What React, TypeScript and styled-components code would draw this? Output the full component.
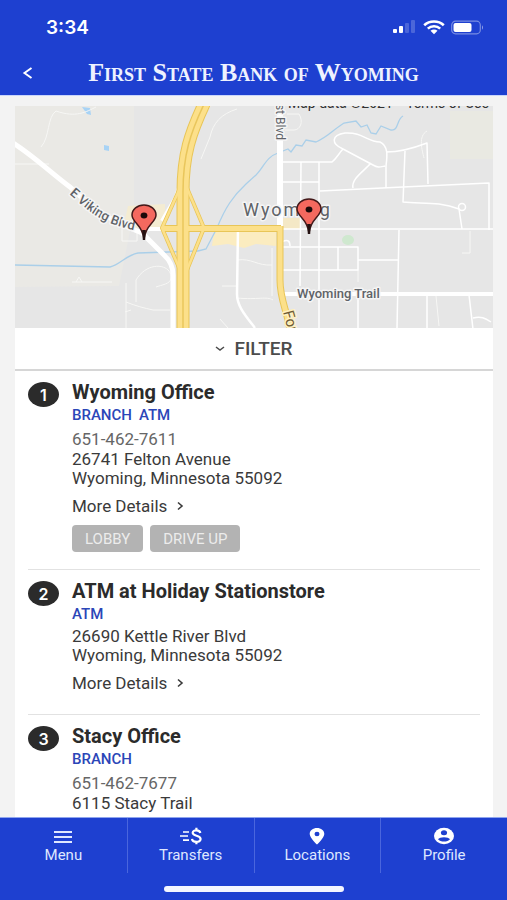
import React from "react";
import styled, { createGlobalStyle } from "styled-components";

const BLUE = "#1e40d0";

const GlobalStyle = createGlobalStyle`
  * { box-sizing: border-box; }
  body { margin: 0; background: #f2f2f2; font-family: Roboto, sans-serif; color: #303030; }
  button { font: inherit; cursor: pointer; }
  a { color: inherit; text-decoration: none; }
`;

const Shell = styled.div`
  height: 100vh;
  display: flex;
  flex-direction: column;
`;

const Header = styled.header`
  flex: none;
  background: ${BLUE};
  color: #fff;
  border-bottom: 1px solid #c9d5fb;
`;

const StatusBar = styled.div`
  display: flex;
  align-items: center;
  justify-content: space-between;
  height: 54px;
  padding: 0 22px 0 46px;
`;

const Clock = styled.time`
  font-family: Inter, sans-serif;
  font-size: 19px;
  font-weight: 600;
`;

const StatusIcons = styled.div`
  display: flex;
  align-items: center;
  gap: 6px;
`;

const TitleBar = styled.div`
  display: grid;
  grid-template-columns: 56px 1fr 56px;
  align-items: center;
  height: 41px;
  padding-bottom: 4px;
`;

const BackButton = styled.button`
  display: flex;
  align-items: center;
  height: 36px;
  padding: 0 0 0 22px;
  border: 0;
  background: none;
  color: inherit;
`;

const BankName = styled.h1`
  margin: 0;
  text-align: center;
  white-space: nowrap;
  font-family: "Liberation Serif", serif;
  font-size: 26px;
  line-height: 32px;
  font-weight: 700;
  font-variant: small-caps;
  color: #eef2ff;
`;

const Main = styled.main`
  flex: 1;
  min-height: 0;
  overflow-y: auto;
  scrollbar-width: none;
  padding: 10px 14px 0 15px;
  background: #f3f3f3;
`;

const Card = styled.div`
  background: #fff;
`;

const Map = styled.svg`
  display: block;
  width: 100%;
  height: 222px;
  background: #e6e6e6;
`;

const FilterButton = styled.button`
  display: flex;
  align-items: center;
  justify-content: center;
  gap: 9px;
  width: 100%;
  height: 43px;
  padding: 0;
  border: 0;
  border-bottom: 2px solid #d6d6d6;
  background: #fff;
  color: #4c4c4c;
  font-size: 19px;
  font-weight: 500;
`;

const List = styled.ol`
  list-style: none;
  margin: 0;
  padding: 0 13px;
`;

const Item = styled.li<{ $tall: boolean }>`
  display: flex;
  gap: 13px;
  padding: 9px 0 ${(p) => (p.$tall ? 21 : 17)}px;
  border-bottom: 1px solid #e2e2e2;
`;

const Badge = styled.span`
  flex: none;
  display: grid;
  place-items: center;
  width: 31px;
  height: 25px;
  margin-top: 2px;
  border-radius: 50%;
  background: #2b2b2b;
  color: #fff;
  font-family: Inter, sans-serif;
  font-size: 16px;
  font-weight: 600;
`;

const Details = styled.div`
  flex: 1;
  min-width: 0;
`;

const Name = styled.h2`
  margin: 0;
  font-size: 20px;
  line-height: 24px;
  font-weight: 700;
  color: #2b2b2b;
`;

const Tags = styled.div`
  display: flex;
  gap: 7px;
  margin-bottom: 2px;
  font-size: 15px;
  line-height: 22px;
  font-weight: 500;
  color: #2b46b8;
`;

const Phone = styled.a`
  display: block;
  font-size: 17px;
  line-height: 22px;
  color: #666;
`;

const Address = styled.address`
  font-style: normal;
  font-size: 17px;
  line-height: 19px;
  color: #3a3a3a;
`;

const MoreLink = styled.a`
  display: inline-flex;
  align-items: center;
  gap: 9px;
  margin-top: 8px;
  font-size: 17px;
  line-height: 20px;
  vertical-align: top;
  color: #3a3a3a;
`;

const Chips = styled.div`
  display: flex;
  gap: 7px;
  margin-top: 9px;
`;

const Chip = styled.button`
  height: 27px;
  padding: 0 13px;
  border: 0;
  border-radius: 4px;
  background: #b3b3b3;
  color: #ececec;
  font-size: 15px;
`;

const Footer = styled.footer`
  flex: none;
  background: ${BLUE};
  border-top: 1px solid #8fa5ee;
`;

const Nav = styled.nav`
  display: grid;
  grid-template-columns: repeat(4, 1fr);
  height: 55px;
`;

const Tab = styled.a`
  display: flex;
  flex-direction: column;
  align-items: center;
  gap: 1px;
  padding-top: 9px;
  color: #dfe7ff;
  font-size: 15px;
  line-height: 18px;
  & + & { border-left: 1px solid #4a66dd; }
`;

const HomeIndicator = styled.div`
  width: 180px;
  height: 6px;
  margin: 13px auto 8px;
  border-radius: 3px;
  background: #f4f6ff;
`;

const Chevron = ({ d, w, h, sw = 2 }: { d: string; w: number; h: number; sw?: number }) => (
  <svg width={w} height={h} viewBox={`0 0 ${w} ${h}`} fill="none" stroke="currentColor" strokeWidth={sw} aria-hidden="true">
    <path d={d} />
  </svg>
);

const Signal = () => (
  <svg width="24" height="14" viewBox="0 0 24 14" fill="#fff" aria-hidden="true">
    <rect x="0" y="9" width="4" height="4" rx="1" />
    <rect x="6" y="6" width="4" height="7" rx="1" />
    <rect x="12" y="3" width="4" height="10" rx="1" opacity=".2" />
    <rect x="18" y="0" width="4" height="13" rx="1" opacity=".2" />
  </svg>
);

const Wifi = () => (
  <svg width="22" height="15" viewBox="0 0 22 15" fill="none" stroke="#fff" strokeWidth="2.6" aria-hidden="true">
    <path d="M1.200 5.200C6.500.2 15.500.2 20.800 5.200" />
    <path d="M4.800 8.600c3.400-3.200 9-3.200 12.400 0" />
    <path d="M7.500 10.800c2-1.700 5-1.700 7 0L11 14.200z" fill="#fff" stroke="none" />
  </svg>
);

const Battery = () => (
  <svg width="34" height="15" viewBox="0 0 34 15" aria-hidden="true">
    <rect x=".7" y="1.200" width="28.600" height="12.600" rx="3.800" fill="none" stroke="#fff" strokeOpacity=".4" strokeWidth="1.200" />
    <rect x="2.500" y="3" width="18" height="9" rx="2" fill="#fff" />
    <path d="M31 5.200q2 2.200 0 4.600z" fill="#fff" opacity=".5" />
  </svg>
);

const Pin = ({ x, y }: { x: number; y: number }) => (
  <g transform={`translate(${x} ${y})`}>
    <path d="M0-1C-.8-7-2.500-11-7-16c-3-3.400-5-5.500-5-9a12 10 0 0 1 24 0c0 3.500-2 5.600-5 9C2.500-11 .8-7 0-1z" fill="#f4695f" stroke="#43191a" strokeWidth="1.500" />
    <path d="M-1.800-10h3.600L1.200 0h-2.400z" fill="#241111" />
    <ellipse cy="-24.500" rx="3.400" ry="3" fill="#1b0a0a" />
  </g>
);

const MapView = () => (
  <Map viewBox="15 106 478 222" preserveAspectRatio="xMidYMid slice" role="img" aria-label="Map of Wyoming, Minnesota">
    <rect x="0" y="90" width="520" height="250" fill="#e6e6e6" />
    <path d="M15 106h119v105l-15 75-104 1z" fill="#eae9e5" />
    <path d="M450 111h43v48h-43z" fill="#e9e9e2" />
    <path d="M82 107l8 1 1 7-4-1z" fill="#a8d3f5" />
    <path d="M104 145l5 1v5l-5-1z" fill="#a8d3f5" />
    <path d="M124 224l4-18 37-2v24h-40z" fill="#f4ecd2" />
    <path d="M214 231h62v15l-20-2-12 4-16-4-16 2z" fill="#fbecc0" />
    <path d="M283 218h17v11h-17z" fill="#f4e8c6" />
    <ellipse cx="348" cy="240" rx="6" ry="5" fill="#cfe8cf" />

    <g fill="none" stroke="#aacfe9" strokeWidth="1.300">
      <path d="M15 265l95 2c10-2 16-12 28-14l60-2" />
      <path d="M198 251l8-2 11-21c8-20 16-32 29-44l10-9c8-8 10-18 22-22l10-4 3 3 5-7 6 1 4-6 10 2c12-5 18-13 28-19l12-2 5 6 6-2 4 8 5 1 5-8 10 4c8 1 5-10 12-14" />
    </g>

    <g fill="none" stroke="#f7f7f5" strokeWidth="1">
      <path d="M41 147c9-10 6-30 15-36 20 7 30 1 40-4M15 164h34M237 109c-16 5-24 14-27 28l-9 22" />
      <path d="M72 282h40m-36 0l3-5 3 5M126 328v-45" />
      <path d="M136 302v-22c12-20 36-16 35-2 0 6-10 7-15 9M126 302c10 4 18 6 27 8l17 0M131 310l-6 2M122 225v16h15v-11" />
      <path d="M222 286h14M237 260c15-2 20 6 35 5M237 298c20 2 30-2 36 2M272 248v48M220 319l8 9" />
      <path d="M287 114h12c5 8 1 16-5 16h-9M470 231v22h-8M424 158c-2-8-6-22 3-27M436 296l3 30M358 270v12" />
    </g>

    <g fill="none" stroke="#fff" strokeWidth="1.500" strokeLinejoin="round">
      <path d="M282 162h50c5-4 7-9 11-13M282 182h37M320 191l83-4 86-4v47M301 162l-1 124M319 162v166" />
      <path d="M343 149c-12-5-12-14 2-16 18-1 22 9 35 9 9 4 7 16 6 24v22M343 149l30 16c5 3 7 2 12 1M371 163c-8 9-20 16-18 25" />
      <path d="M386 152c16 0 28-4 41-9l1 41M405 151l-2 51c18 2 36-1 56 7l3 20" />
      <circle cx="462" cy="207" r="3.500" />
      <path d="M280 229h213M282 247h76v23h-75M338 247v23M358 260h41M399 230l-2 98M358 295v33M427 295v33M469 295l4 34M473 318c8-2 12 0 18 4M282 242c6-3 8-1 8 4" />
    </g>
    <path d="M238 228l-1 66c0 12 8 21 18 34" fill="none" stroke="#fff" strokeWidth="2.500" />
    <path d="M280 106v126" fill="none" stroke="#fff" strokeWidth="6" />
    <path d="M282 294h211" fill="none" stroke="#fff" strokeWidth="4" />
    <path d="M13 143c22 14 38 30 57 44 20 18 35 32 72 46l22 22q9 8 9 20v56" fill="none" stroke="#fff" strokeWidth="5" />
    <path d="M146 229h20M212 100c-32 50-26 72-36 97l-14 24" fill="none" stroke="#fff" strokeWidth="4" />

    <g fill="none" stroke="#e8c557" strokeWidth="4" strokeLinejoin="round">
      <path d="M180 188l-18 40 18 42M187 188l17 40-17 42" />
      <path d="M162 228.500h119" strokeWidth="7" />
      <path d="M280 226v54c0 20 7 30 10 50" strokeWidth="7" />
      <path d="M206 100c-16 33-23 55-23 92v140" strokeWidth="13" />
    </g>
    <g fill="none" stroke="#fce08a" strokeWidth="2.500" strokeLinejoin="round">
      <path d="M180 188l-18 40 18 42M187 188l17 40-17 42" />
      <path d="M162 228.500h119" strokeWidth="5" />
      <path d="M280 226v54c0 20 7 30 10 50" strokeWidth="5" />
      <path d="M206 100c-16 33-23 55-23 92v140" strokeWidth="11" />
    </g>
    <path d="M206 100c-16 33-23 55-23 92v140" fill="none" stroke="#e9c65c" strokeWidth="1.500" />

    <g fontFamily="Roboto, sans-serif" fill="#5f6368" stroke="#f5f5f5" strokeWidth="3" paintOrder="stroke" strokeLinejoin="round">
      <defs>
        <path id="viking" d="M69 194c20 17 32 31 74 38" />
      </defs>
      <text fontSize="13" fontWeight="500"><textPath href="#viking">E Viking Blvd</textPath></text>
      <text x="243" y="216" fontSize="18" letterSpacing="2">Wyoming</text>
      <text x="297" y="298" fontSize="13" fontWeight="500">Wyoming Trail</text>
      <text transform="translate(276 104) rotate(90)" fontSize="12">st Blvd</text>
      <text transform="translate(283 312) rotate(75)" fontSize="15" fill="#6d5a35" stroke="#fff0c0">Forest</text>
    </g>
    <g fontFamily="Roboto, sans-serif" fontSize="14" fill="#333">
      <text x="288" y="108">Map data ©2021</text>
      <text x="406" y="108">Terms of Use</text>
    </g>
    <Pin x={144} y={240} />
    <Pin x={309} y={234} />
  </Map>
);

const MenuIcon = () => (
  <svg width="20" height="18" viewBox="0 0 20 18" stroke="currentColor" strokeWidth="2" aria-hidden="true">
    <path d="M1 5h18M1 10h18M1 15h18" />
  </svg>
);

const TransfersIcon = () => (
  <svg width="22" height="18" viewBox="0 0 22 18" fill="none" stroke="#fff" aria-hidden="true">
    <path d="M3 5h6M0 9h8M3 13.200h6" strokeWidth="1.700" />
    <path d="M20.300 6c-.4-3.400-7.600-3.600-7.600-.3 0 3.800 7.900 2.300 7.900 6.400 0 3.800-8.200 3.700-8.600-.2M16.400.8v2.700M16.400 14.600v2.700" strokeWidth="2.200" />
  </svg>
);

const LocationIcon = () => (
  <svg width="16" height="18" viewBox="0 0 16 18" fill="#fff" fillRule="evenodd" aria-hidden="true">
    <path d="M8 1C4 1 .7 3.500.7 7 .7 11 8 17.500 8 17.500S15.300 11 15.300 7C15.300 3.500 12 1 8 1zm0 3.800a2.500 2.200 0 1 1 0 4.400 2.500 2.200 0 0 1 0-4.400z" />
  </svg>
);

const ProfileIcon = () => (
  <svg width="20" height="18" viewBox="0 0 20 18" aria-hidden="true">
    <ellipse cx="10" cy="9" rx="10" ry="8.300" fill="#fff" />
    <ellipse cx="10" cy="5.800" rx="3.100" ry="2.500" fill={BLUE} />
    <path d="M4 12.200c1.500-2.700 10.500-2.700 12 0-2.500 3.200-9.500 3.200-12 0z" fill={BLUE} />
  </svg>
);

type Location = { name: string; tags: string[]; phone?: string; address: string[]; chips?: string[] };

const locations: Location[] = [
  { name: "Wyoming Office", tags: ["BRANCH", "ATM"], phone: "651-462-7611", address: ["26741 Felton Avenue", "Wyoming, Minnesota 55092"], chips: ["LOBBY", "DRIVE UP"] },
  { name: "ATM at Holiday Stationstore", tags: ["ATM"], address: ["26690 Kettle River Blvd", "Wyoming, Minnesota 55092"] },
  { name: "Stacy Office", tags: ["BRANCH"], phone: "651-462-7677", address: ["6115 Stacy Trail"] },
];

const tabs = [
  { label: "Menu", icon: <MenuIcon /> },
  { label: "Transfers", icon: <TransfersIcon /> },
  { label: "Locations", icon: <LocationIcon /> },
  { label: "Profile", icon: <ProfileIcon /> },
];

export default function App() {
  return (
    <Shell>
      <GlobalStyle />
      <Header>
        <StatusBar>
          <Clock>3:34</Clock>
          <StatusIcons>
            <Signal />
            <Wifi />
            <Battery />
          </StatusIcons>
        </StatusBar>
        <TitleBar>
          <BackButton aria-label="Back">
            <Chevron w={11} h={12} d="M9.500 1L2.500 6l7 5" sw={2} />
          </BackButton>
          <BankName>First State Bank of Wyoming</BankName>
        </TitleBar>
      </Header>
      <Main>
        <Card>
          <MapView />
          <FilterButton>
            <Chevron w={10} h={8} d="M1 2l4 3 4-3" sw={1.5} />
            FILTER
          </FilterButton>
          <List>
            {locations.map((loc, i) => (
              <Item key={loc.name} $tall={!loc.chips}>
                <Badge>{i + 1}</Badge>
                <Details>
                  <Name>{loc.name}</Name>
                  <Tags>
                    {loc.tags.map((t) => (
                      <span key={t}>{t}</span>
                    ))}
                  </Tags>
                  {loc.phone && <Phone href={`tel:${loc.phone}`}>{loc.phone}</Phone>}
                  <Address>
                    {loc.address.map((line) => (
                      <div key={line}>{line}</div>
                    ))}
                  </Address>
                  <MoreLink href="#details">
                    More Details
                    <Chevron w={8} h={10} d="M2 1.500l4 3.500-4 3.500" sw={1.6} />
                  </MoreLink>
                  {loc.chips && (
                    <Chips>
                      {loc.chips.map((c) => (
                        <Chip key={c}>{c}</Chip>
                      ))}
                    </Chips>
                  )}
                </Details>
              </Item>
            ))}
          </List>
        </Card>
      </Main>
      <Footer>
        <Nav>
          {tabs.map((t) => (
            <Tab key={t.label} href={`#${t.label.toLowerCase()}`}>
              {t.icon}
              {t.label}
            </Tab>
          ))}
        </Nav>
        <HomeIndicator />
      </Footer>
    </Shell>
  );
}
